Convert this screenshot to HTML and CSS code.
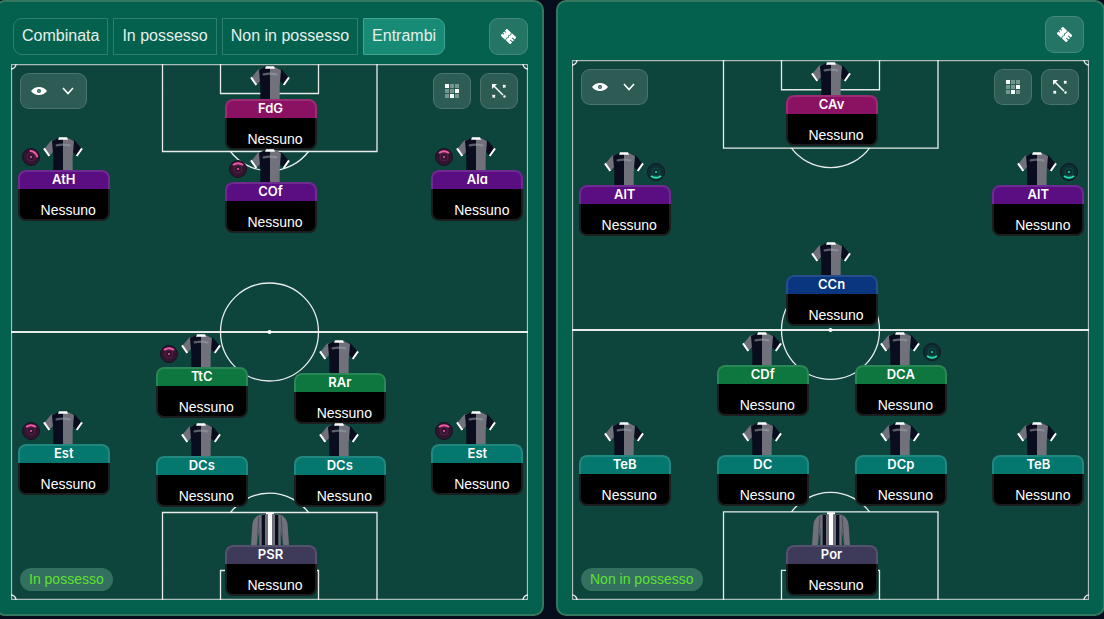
FILE: index.html
```html
<!DOCTYPE html>
<html lang="it">
<head>
<meta charset="utf-8">
<title>Tattica</title>
<link rel="stylesheet" href="styles.css">
</head>
<body>

<!-- shared shapes -->
<svg class="defs" aria-hidden="true">
	<symbol id="shirt" viewBox="0 0 120 99">
		<path fill="#70717b" d="M44 5 24 11 3 37 19 57 33 42z"/>
		<path fill="#090d1d" d="M76 5 96 11 117 37 101 57 87 42z"/>
		<path fill="#090d1d" d="M60 4H44L27 12 31 60V99H60z"/>
		<path fill="#70717b" d="M60 4H76L93 12 89 60V99H60z"/>
		<path fill="none" stroke="#fff" stroke-width="6" d="M3 34 19 57M117 34 101 57"/>
		<path fill="none" stroke="#a0a2ab" stroke-opacity=".55" stroke-width="7" stroke-linecap="round" d="M41 25Q60 21 79 25"/>
		<path fill="#fff" d="M48 1H72L75 8H45z"/>
	</symbol>
	<symbol id="keeper" viewBox="0 0 120 99">
		<path fill="#70717b" d="M45 5 22 11Q8 22 7 40L3 99H20L30 45z"/>
		<path fill="#70717b" d="M75 5 98 11Q112 22 113 40L117 99H100L90 45z"/>
		<path fill="#70717b" d="M28 8H92V99H28z"/>
		<path fill="#090d1d" d="M35 8H45V99H35zM75 8H85V99H75z"/>
		<path fill="#4b4d5a" d="M25 14H28L26 52 22 90H20zM95 14H92L94 52 98 90H100z"/>
		<path fill="#fff" d="M54 2H66V99H54z"/>
		<path fill="#fff" d="M48 1H72V7H48z"/>
	</symbol>
	<symbol id="eye" viewBox="0 0 16 10">
		<path fill="#fff" fill-rule="evenodd" d="M0 5Q3 1 8 1T16 5Q13 9 8 9T0 5zM8 3A2 2 0 1 0 8 7 2 2 0 0 0 8 3z"/>
		<circle fill="#fff" cx="8" cy="5" r=".6"/>
	</symbol>
	<symbol id="chevron" viewBox="0 0 12 8">
		<path fill="none" stroke="#fff" stroke-width="1.600" d="M1 1 6 6.500 11 1"/>
	</symbol>
	<symbol id="grid" viewBox="0 0 14 14">
		<path fill="#fff" fill-opacity=".35" d="M5 0h4v4H5zM10 0h4v4h-4zM0 5h4v4H0zM5 5h4v4H5zM0 10h4v4H0zM10 10h4v4h-4z"/>
		<path fill="#fff" d="M0 0h4v4H0zM10 5h4v4h-4zM5 10h4v4H5z"/>
	</symbol>
	<symbol id="arrow" viewBox="0 0 14 14">
		<path fill="none" stroke="#fff" stroke-width="1.500" d="M1 1 11 11"/>
		<path fill="#fff" d="M0 0H5L0 5z"/>
		<path fill="none" stroke="#fff" stroke-width="1.200" d="M11 1 13.500 3.500M13.500 1 11 3.500M.5 11 3 13.500M3 11 .5 13.500"/>
		<circle fill="#fff" cx="12.500" cy="12.500" r="1.200"/>
	</symbol>
	<symbol id="clear" viewBox="0 0 16 16">
		<g fill="#fff" transform="rotate(42 8 8)">
			<path d="M1 3H7L8 5 7 7 8 9 7 11 8 13H1V10H3V9H1V7H3V6H1z"/>
			<path d="M8 3H15V6H12V7H15V9H12V10H15V13H9L8 11 9 9 8 7 9 5z"/>
		</g>
	</symbol>
	<symbol id="pitch" viewBox="0 0 517 536" preserveAspectRatio="none">
		<g fill="none" stroke="#fff" stroke-opacity=".9" stroke-width="1.300">
			<path stroke-opacity=".65" d="M.5 .5H516.500V535.500H.5z"/>
			<path d="M151.500 0V87.500H366V0M209.500 0V29.500H307.500V0"/>
			<path d="M151.500 536V448.500H366V536M209.500 536V506.500H307.500V536"/>
			<path stroke-width="2" d="M0 268H517"/>
			<circle cx="258.500" cy="268" r="49"/>
			<path d="M219.500 87.500A49 49 0 0 0 297.500 87.500M219.500 448.500A49 49 0 0 1 297.500 448.500"/>
			<path d="M5 0A5 5 0 0 1 0 5M512 0A5 5 0 0 0 517 5M5 536A5 5 0 0 0 0 531M512 536A5 5 0 0 1 517 531"/>
		</g>
		<circle fill="#fff" cx="258.500" cy="268" r="2"/>
	</symbol>
	<symbol id="focus" viewBox="0 0 18 18">
		<circle class="focus-disc" cx="9" cy="9" r="8.500"/>
		<circle class="focus-ring" cx="9" cy="9" r="4"/>
		<circle class="focus-dot" cx="9" cy="9" r="1"/>
	</symbol>
</svg>

<main class="board">
	<section class="panel panel-tabs">
		<header class="panel-head">
			<nav class="tabs">
				<button type="button" class="tab">Combinata</button>
				<button type="button" class="tab">In possesso</button>
				<button type="button" class="tab">Non in possesso</button>
				<button type="button" class="tab active">Entrambi</button>
			</nav>
			<button type="button" class="tool tool-clear" aria-label="Svuota"><svg><use href="#clear"/></svg></button>
		</header>
		<div class="pitch">
			<svg class="lines"><use href="#pitch"/></svg>
			<div class="players" id="in"></div>
			<div class="toolbar">
				<button type="button" class="tool tool-view" aria-label="Vista"><svg class="i-eye"><use href="#eye"/></svg><svg class="i-chevron"><use href="#chevron"/></svg></button>
				<button type="button" class="tool push" aria-label="Griglia"><svg class="i-small"><use href="#grid"/></svg></button>
				<button type="button" class="tool" aria-label="Movimenti"><svg class="i-small"><use href="#arrow"/></svg></button>
			</div>
			<span class="phase">In possesso</span>
		</div>
	</section>

	<section class="panel">
		<header class="panel-head">
			<button type="button" class="tool tool-clear push" aria-label="Svuota"><svg><use href="#clear"/></svg></button>
		</header>
		<div class="pitch">
			<svg class="lines"><use href="#pitch"/></svg>
			<div class="players" id="out"></div>
			<div class="toolbar">
				<button type="button" class="tool tool-view" aria-label="Vista"><svg class="i-eye"><use href="#eye"/></svg><svg class="i-chevron"><use href="#chevron"/></svg></button>
				<button type="button" class="tool push" aria-label="Griglia"><svg class="i-small"><use href="#grid"/></svg></button>
				<button type="button" class="tool" aria-label="Movimenti"><svg class="i-small"><use href="#arrow"/></svg></button>
			</div>
			<span class="phase">Non in possesso</span>
		</div>
	</section>
</main>

<script>
var COLS = [10.2, 36.9, 50.2, 63.6, 90.2];

// role, column, top of the card (% of the pitch), line, focus
var inPossession = [
	["FdG", 2, 6.5, "attack"],
	["AtH", 0, 19.8, "wing", "pink side"],
	["COf", 2, 22, "wing", "pink"],
	["Ala", 4, 19.8, "wing", "pink"],
	["TtC", 1, 56.5, "mid", "pink"],
	["RAr", 3, 57.6, "mid"],
	["Est", 0, 70.9, "back", "pink"],
	["DCs", 1, 73.1, "back"],
	["DCs", 3, 73.1, "back"],
	["Est", 4, 70.9, "back", "pink"],
	["PSR", 2, 89.8, "goal"]
];
var outPossession = [
	["CAv", 2, 6.5, "attack"],
	["AlT", 0, 23.1, "wing", "green"],
	["AlT", 4, 23.1, "wing", "green"],
	["CCn", 2, 39.8, "centre"],
	["CDf", 1, 56.5, "mid"],
	["DCA", 3, 56.5, "mid", "green"],
	["TeB", 0, 73.1, "back"],
	["DC", 1, 73.1, "back"],
	["DCp", 3, 73.1, "back"],
	["TeB", 4, 73.1, "back"],
	["Por", 2, 89.8, "goal"]
];

function draw(id, list) {
	var html = "";
	for (var i = 0; i < list.length; i++) {
		var p = list[i];
		var focus = p[4] ? '<svg class="focus ' + p[4] + '" viewBox="0 0 18 18"><use href="#focus"/>' +
			'<path class="focus-arc" d="M4 5Q9 1.500 14 5"/></svg>' : "";
		html += '<div class="player" style="left:' + COLS[p[1]] + '%;top:' + p[2] + '%">' +
			'<svg class="shirt"><use href="#' + (p[3] == "goal" ? "keeper" : "shirt") + '"/></svg>' + focus +
			'<div class="card ' + p[3] + '"><b class="role">' + p[0] + '</b><span class="name">Nessuno</span></div></div>';
	}
	document.getElementById(id).innerHTML = html;
}

draw("in", inPossession);
draw("out", outPossession);
</script>
</body>
</html>
```
FILE: styles.css
```css
* {
	box-sizing: border-box;
}
html {
	overflow: hidden;
	background: #080d1c;
}
body {
	margin: 0;
	font: 14px/18px "Liberation Sans", Arial, sans-serif;
	color: #fff;
}
.defs {
	position: absolute;
	width: 0;
	height: 0;
}
.board {
	display: grid;
	grid-template-columns: 1fr 1fr;
	gap: 12px;
	height: 100vh;
	margin: 0 -1px 0 -5px;
	padding-bottom: 3px;
}

/* panels */
.panel {
	display: flex;
	flex-direction: column;
	gap: 7px;
	padding: 14px;
	border: 2px solid #34785f;
	border-radius: 10px;
	background: #04614e;
}
.panel-tabs {
	gap: 9px;
	padding-top: 16px;
}
.panel-head {
	display: flex;
	justify-content: space-between;
	padding-right: 5px;
}
.panel-tabs .panel-head {
	padding: 0 0 0 2px;
}
.push {
	margin-left: auto;
}

.tabs {
	display: flex;
	gap: 5px;
}
.tab {
	height: 37px;
	padding: 0 8px 1px;
	border: 1px solid #2f7e6b;
	background: none;
	color: #e4f0ec;
	font: inherit;
	font-size: 16px;
	white-space: nowrap;
}
.tab:first-child {
	border-radius: 9px 0 0 9px;
}
.tab:last-child {
	border-radius: 0 9px 9px 0;
}
.tab.active {
	border-color: #45a491;
	background: #188b77;
}

.tool {
	display: flex;
	align-items: center;
	justify-content: center;
	width: 38px;
	height: 36px;
	padding: 0;
	border: 1px solid rgba(255, 255, 255, .15);
	border-radius: 9px;
	background: rgba(255, 255, 255, .13);
}
.tool-clear {
	width: 39px;
	height: 37px;
}
.tool-clear svg {
	width: 15px;
	height: 15px;
}
.tool-view {
	gap: 15px;
	width: 67px;
	padding-right: 3px;
}
.i-eye {
	width: 16px;
	height: 10px;
}
.i-chevron {
	width: 12px;
	height: 8px;
}
.i-small {
	width: 14px;
	height: 14px;
}

/* pitch */
.pitch {
	position: relative;
	flex: 1;
	display: flex;
	flex-direction: column;
	justify-content: space-between;
	align-items: flex-start;
	padding: 9px 10px 9px 9px;
	background: #0d443b;
}
.lines,
.players {
	position: absolute;
	top: 0;
	left: 0;
	width: 100%;
	height: 100%;
}
.toolbar {
	position: relative;
	display: flex;
	gap: 9px;
	width: 100%;
}
.phase {
	position: relative;
	padding: 2px 9px 3px;
	border-radius: 12px;
	background: #33705f;
	color: #5fe032;
}

/* players */
.player {
	position: absolute;
	width: 92px;
	margin: -33px 0 0 -46px;
}
.shirt {
	display: block;
	width: 40px;
	height: 33px;
	margin: 0 25px;
}
.card {
	height: 51px;
	border: 2px solid #1b1d1f;
	border-radius: 8px;
	background: #000;
	text-align: center;
}
.role {
	display: block;
	height: 19px;
	margin: -2px -2px 0;
	border: 2px solid rgba(255, 255, 255, .12);
	border-bottom: 0;
	border-radius: 8px 8px 0 0;
	font: 600 13px/15px Inter, sans-serif;
	font-feature-settings: "cv11";
}
.name {
	display: block;
	padding: 12px 0 0 9px;
}
.attack .role { background: #8b1262; }
.wing .role { background: #5b0e82; }
.centre .role { background: #09367e; }
.mid .role { background: #0e7740; }
.back .role { background: #04786e; }
.goal .role { background: #3d3b59; }

.focus {
	position: absolute;
	top: 11px;
	left: 4px;
	width: 18px;
	height: 18px;
	overflow: visible;
}
.focus-disc {
	fill: var(--disc);
	stroke: #141521;
}
.focus-ring {
	fill: none;
	stroke: var(--ring);
}
.focus-dot {
	fill: var(--arc);
}
.focus-arc {
	fill: none;
	stroke: var(--arc);
	stroke-width: 2;
}
.pink {
	--disc: #331530;
	--ring: #551f48;
	--arc: #f25aa8;
}
.green {
	--disc: #0b2f33;
	--ring: #0e4a48;
	--arc: #25dfae;
	left: auto;
	right: 6px;
}
.green .focus-arc {
	transform: rotate(180deg);
	transform-origin: 9px 9px;
}
.side .focus-arc {
	transform: rotate(40deg);
	transform-origin: 9px 9px;
}
```
